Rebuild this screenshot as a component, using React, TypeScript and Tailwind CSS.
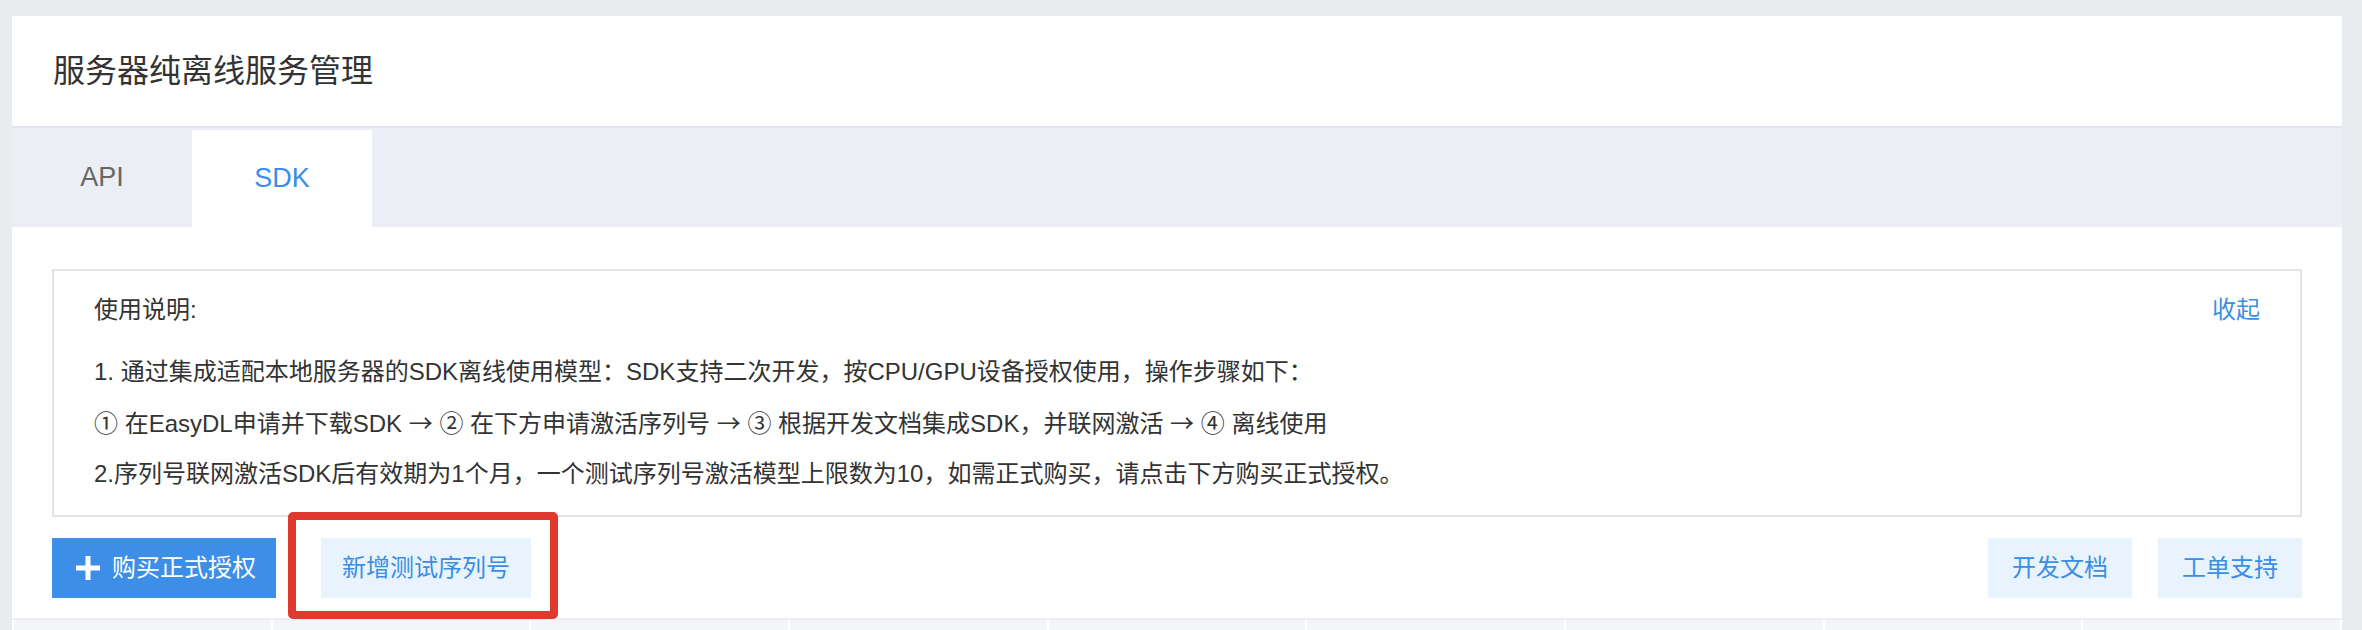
import React from "react";

const font = { fontFamily: '"Liberation Sans", "Noto Sans CJK SC", sans-serif' };

function Arrow() {
  return <span className="font-['Noto_Sans_CJK_SC',sans-serif]" style={{ fontFamily: '"Noto Sans CJK SC", sans-serif' }}>→</span>;
}

export default function App() {
  const cols = Array.from({ length: 9 });
  return (
    <div
      className="w-[2362px] h-[630px] overflow-hidden bg-[#e9ecef] pt-[16px] pl-[12px] pr-[20px]"
      style={font}
    >
      <div className="bg-white">
        {/* Header */}
        <div className="h-[110px] flex items-center pl-[41px] text-[32px] text-[#333]">
          服务器纯离线服务管理
        </div>

        {/* Tabs */}
        <div className="h-[101px] border-t-2 border-[#e3e5ec] bg-[#eceef6] flex">
          <div className="w-[180px] flex items-center justify-center text-[27px] text-[#666]">
            API
          </div>
          <div className="w-[180px] mt-[2px] bg-white flex items-center justify-center text-[27px] text-[#3a8ee6]">
            SDK
          </div>
        </div>

        {/* Content */}
        <div className="px-[40px] pt-[42px] pb-[20px]">
          <div className="h-[248px] border-2 border-[#e3e4ea] pl-[40px] pr-[40px] pt-[14px] text-[24px] text-[#333] leading-[50px]">
            <div className="flex justify-between">
              <span>使用说明:</span>
              <span className="text-[#3a8ee6]">收起</span>
            </div>
            <div className="mt-[12px]">
              1. 通过集成适配本地服务器的SDK离线使用模型：SDK支持二次开发，按CPU/GPU设备授权使用，操作步骤如下：
            </div>
            <div>
              ① 在EasyDL申请并下载SDK <Arrow /> ② 在下方申请激活序列号 <Arrow /> ③ 根据开发文档集成SDK，并联网激活 <Arrow /> ④ 离线使用
            </div>
            <div>
              2.序列号联网激活SDK后有效期为1个月，一个测试序列号激活模型上限数为10，如需正式购买，请点击下方购买正式授权。
            </div>
          </div>

          {/* Buttons */}
          <div className="mt-[21px] flex justify-between items-center">
            <div className="flex items-center">
              <button className="h-[60px] w-[224px] bg-[#3d8ee6] text-white text-[24px] flex items-center pl-[24px]">
                <svg width="24" height="24" viewBox="0 0 24 24" className="mr-[12px]">
                  <rect x="9.5" y="0" width="5" height="24" fill="white" />
                  <rect x="0" y="9.5" width="24" height="5" fill="white" />
                </svg>
                购买正式授权
              </button>
              <div className="relative ml-[45px]">
                <button className="h-[60px] w-[210px] bg-[#e8f3fd] text-[#3a8ee6] text-[24px] flex items-center justify-center">
                  新增测试序列号
                </button>
                <span className="absolute -left-[33px] -right-[27px] -top-[26px] -bottom-[21px] border-[8px] border-[#e0392e] rounded-[5px] pointer-events-none" />
              </div>
            </div>
            <div className="flex items-center gap-[26px]">
              <button className="h-[60px] w-[144px] bg-[#e8f3fd] text-[#3a8ee6] text-[24px] flex items-center justify-center">
                开发文档
              </button>
              <button className="h-[60px] w-[144px] bg-[#e8f3fd] text-[#3a8ee6] text-[24px] flex items-center justify-center">
                工单支持
              </button>
            </div>
          </div>
        </div>

        {/* Table header strip */}
        <div className="border-t-2 border-[#eceef2] flex gap-[2px] px-[2px] h-[40px]">
          {cols.map((_, i) => (
            <div key={i} className="flex-1 bg-[#f4f5f9]" />
          ))}
        </div>
      </div>
    </div>
  );
}
